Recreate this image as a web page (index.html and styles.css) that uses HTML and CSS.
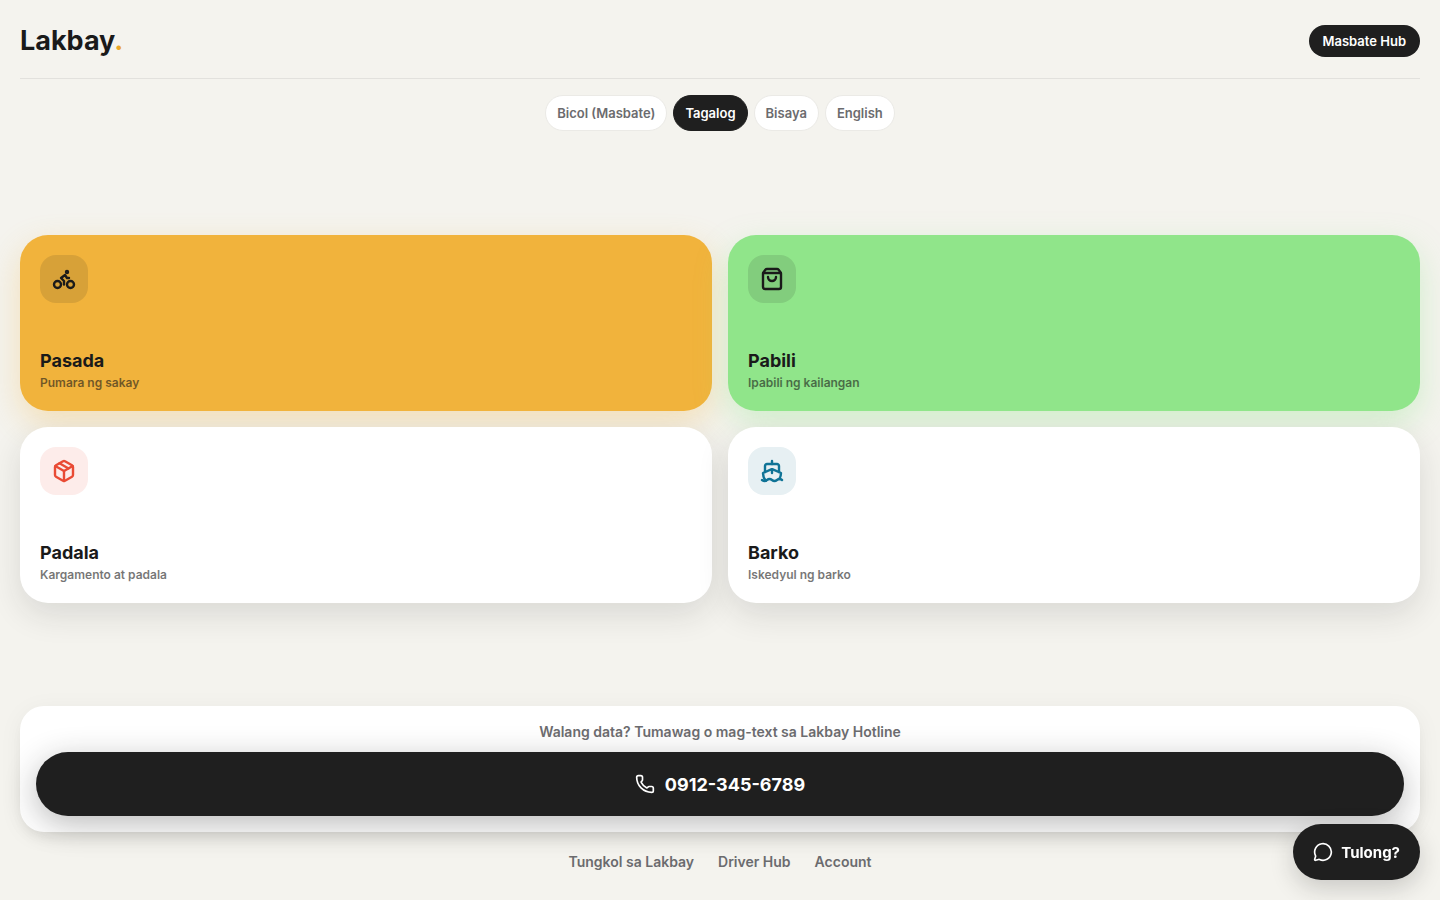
FILE: index.html
```html
<!DOCTYPE html>
<html lang="tl">
<head>
    <meta charset="UTF-8">
    <meta name="viewport" content="width=device-width, initial-scale=1.0">
    <title>Lakbay</title>
    <link rel="stylesheet" href="styles.css">
</head>
<body>
    <div class="app">
        <header class="header">
            <h1 class="logo">Lakbay<span class="dot">.</span></h1>
            <button class="hub" type="button">Masbate Hub</button>
        </header>

        <nav class="languages">
            <button class="lang" type="button">Bicol (Masbate)</button>
            <button class="lang active" type="button">Tagalog</button>
            <button class="lang" type="button">Bisaya</button>
            <button class="lang" type="button">English</button>
        </nav>

        <main class="services">
            <a class="card pasada" href="#pasada">
                <span class="card-icon">
                    <svg class="icon" viewBox="0 0 24 24">
                        <circle cx="18.5" cy="17.5" r="3.5"/>
                        <circle cx="5.5" cy="17.5" r="3.5"/>
                        <circle cx="15" cy="5" r="1"/>
                        <path d="M12 17.5V14l-3-3 4-3 2 3h2"/>
                    </svg>
                </span>
                <span class="card-text">
                    <span class="card-title">Pasada</span>
                    <span class="card-sub">Pumara ng sakay</span>
                </span>
            </a>
            <a class="card pabili" href="#pabili">
                <span class="card-icon">
                    <svg class="icon" viewBox="0 0 24 24">
                        <path d="M16 10a4 4 0 0 1-8 0"/>
                        <path d="M3.103 6.034h17.794"/>
                        <path d="M3.4 5.467a2 2 0 0 0-.4 1.2V20a2 2 0 0 0 2 2h14a2 2 0 0 0 2-2V6.667a2 2 0 0 0-.4-1.2l-2-2.667A2 2 0 0 0 17 2H7a2 2 0 0 0-1.6.8z"/>
                    </svg>
                </span>
                <span class="card-text">
                    <span class="card-title">Pabili</span>
                    <span class="card-sub">Ipabili ng kailangan</span>
                </span>
            </a>
            <a class="card padala" href="#padala">
                <span class="card-icon">
                    <svg class="icon" viewBox="0 0 24 24">
                        <path d="M11 21.73a2 2 0 0 0 2 0l7-4A2 2 0 0 0 21 16V8a2 2 0 0 0-1-1.73l-7-4a2 2 0 0 0-2 0l-7 4A2 2 0 0 0 3 8v8a2 2 0 0 0 1 1.73z"/>
                        <path d="M12 22V12"/>
                        <path d="M3.29 7 12 12l8.71-5"/>
                        <path d="m7.5 4.27 9 5.15"/>
                    </svg>
                </span>
                <span class="card-text">
                    <span class="card-title">Padala</span>
                    <span class="card-sub">Kargamento at padala</span>
                </span>
            </a>
            <a class="card barko" href="#barko">
                <span class="card-icon">
                    <svg class="icon" viewBox="0 0 24 24">
                        <path d="M12 10.189V14"/>
                        <path d="M12 2v3"/>
                        <path d="M19 13V7a2 2 0 0 0-2-2H7a2 2 0 0 0-2 2v6"/>
                        <path d="M19.38 20A11.6 11.6 0 0 0 21 14l-8.188-3.639a2 2 0 0 0-1.624 0L3 14a11.6 11.6 0 0 0 2.81 7.76"/>
                        <path d="M2 21c.6.5 1.2 1 2.5 1 2.5 0 2.5-2 5-2 1.3 0 1.9.5 2.5 1s1.2 1 2.5 1c2.5 0 2.5-2 5-2 1.3 0 1.9.5 2.5 1"/>
                    </svg>
                </span>
                <span class="card-text">
                    <span class="card-title">Barko</span>
                    <span class="card-sub">Iskedyul ng barko</span>
                </span>
            </a>
        </main>

        <section class="hotline">
            <p class="hotline-text">Walang data? Tumawag o mag-text sa Lakbay Hotline</p>
            <a class="call" href="tel:09123456789">
                <svg class="icon small" viewBox="0 0 24 24">
                    <path d="M13.832 16.568a1 1 0 0 0 1.213-.303l.355-.465A2 2 0 0 1 17 15h3a2 2 0 0 1 2 2v3a2 2 0 0 1-2 2A18 18 0 0 1 2 4a2 2 0 0 1 2-2h3a2 2 0 0 1 2 2v3a2 2 0 0 1-.8 1.6l-.468.351a1 1 0 0 0-.292 1.233 14 14 0 0 0 6.392 6.384"/>
                </svg>
                0912-345-6789
            </a>
        </section>

        <footer class="links">
            <a href="#about">Tungkol sa Lakbay</a>
            <a href="#driver">Driver Hub</a>
            <a href="#account">Account</a>
        </footer>
    </div>

    <button class="help" type="button">
        <svg class="icon small" viewBox="0 0 24 24">
            <path d="M2.992 16.342a2 2 0 0 1 .094 1.167l-1.065 3.29a1 1 0 0 0 1.236 1.168l3.413-.998a2 2 0 0 1 1.099.092 10 10 0 1 0-4.777-4.719"/>
        </svg>
        Tulong?
    </button>
</body>
</html>
```
FILE: styles.css
```css
* {
    box-sizing: border-box;
}

body {
    margin: 0;
    font-family: Inter, "Liberation Sans", sans-serif;
    line-height: 1.5;
    color: #1a1a1a;
    background: #f4f3ee;
}

button {
    font-family: inherit;
    border: none;
    cursor: pointer;
}

a {
    color: inherit;
    text-decoration: none;
}

.app {
    min-height: 100vh;
    padding: 20px 20px 28px;
    display: flex;
    flex-direction: column;
}

.icon {
    width: 24px;
    height: 24px;
    fill: none;
    stroke: currentColor;
    stroke-width: 2;
    stroke-linecap: round;
    stroke-linejoin: round;
}

.icon.small {
    width: 20px;
    height: 20px;
}

.header {
    display: flex;
    justify-content: space-between;
    align-items: center;
    padding-bottom: 16px;
    border-bottom: 1px solid #e2e1dd;
}

.logo {
    margin: 0;
    font-size: 27px;
    line-height: 42px;
    font-weight: 700;
}

.dot {
    color: #e9a82c;
}

.hub {
    height: 32px;
    padding: 0 14px;
    border-radius: 16px;
    background: #1f1f1f;
    color: #fff;
    font-size: 13px;
    font-weight: 600;
}

.languages {
    display: flex;
    flex-wrap: wrap;
    justify-content: center;
    gap: 6px;
    padding-top: 16px;
}

.lang {
    height: 36px;
    padding: 0 11px;
    border: 1px solid #ebeae6;
    border-radius: 18px;
    background: #fff;
    color: #6b6b6e;
    font-size: 13px;
    font-weight: 600;
}

.lang.active {
    border-color: #1f1f1f;
    background: #1f1f1f;
    color: #fff;
}

.services {
    flex: 1;
    display: grid;
    grid-template-columns: 1fr 1fr;
    align-content: center;
    gap: 16px;
}

.card {
    min-height: 176px;
    padding: 20px;
    display: flex;
    flex-direction: column;
    justify-content: space-between;
    border-radius: 28px;
    background: #fff;
    box-shadow: 0 12px 32px rgba(31, 31, 31, 0.12);
}

.card-icon {
    width: 48px;
    height: 48px;
    display: flex;
    align-items: center;
    justify-content: center;
    border-radius: 16px;
    background: rgba(31, 31, 31, 0.12);
}

.card-icon .icon {
    stroke-width: 2.4;
}

.card-text {
    display: flex;
    flex-direction: column;
}

.card-title {
    font-size: 18px;
    line-height: 24px;
    font-weight: 700;
}

.card-sub {
    font-size: 12px;
    line-height: 16px;
    font-weight: 600;
    padding-top: 2px;
    opacity: 0.6;
}

.pasada {
    background: #f1b33c;
    box-shadow: 0 12px 32px rgba(241, 179, 60, 0.3);
}

.pabili {
    background: #90e58a;
    box-shadow: 0 12px 32px rgba(144, 229, 138, 0.35);
}

.padala .card-icon {
    background: #fdecea;
    color: #e94b35;
}

.barko .card-icon {
    background: #e7f0f3;
    color: #0f7396;
}

.hotline {
    padding: 16px;
    border-radius: 24px;
    background: #fff;
    box-shadow: 0 4px 24px rgba(31, 31, 31, 0.05), 0 8px 16px -8px rgba(31, 31, 31, 0.12);
}

.hotline-text {
    margin: 0 0 10px;
    font-size: 14px;
    line-height: 20px;
    font-weight: 600;
    text-align: center;
    color: #6b6b6e;
}

.call {
    height: 64px;
    display: flex;
    align-items: center;
    justify-content: center;
    gap: 10px;
    border-radius: 32px;
    background: #1f1f1f;
    color: #fff;
    font-size: 18px;
    font-weight: 700;
    box-shadow: 0 8px 32px rgba(31, 31, 31, 0.3);
}

.links {
    display: flex;
    justify-content: center;
    gap: 24px;
    padding-top: 20px;
    font-size: 14px;
    line-height: 20px;
    font-weight: 600;
    color: #6b6b6e;
}

/* floating help button */
.help {
    position: fixed;
    right: 20px;
    bottom: 20px;
    height: 56px;
    padding: 0 20px;
    display: flex;
    align-items: center;
    gap: 8px;
    border-radius: 28px;
    background: #1f1f1f;
    color: #fff;
    font-size: 15px;
    font-weight: 700;
    box-shadow: 0 8px 24px rgba(31, 31, 31, 0.2);
}
```
